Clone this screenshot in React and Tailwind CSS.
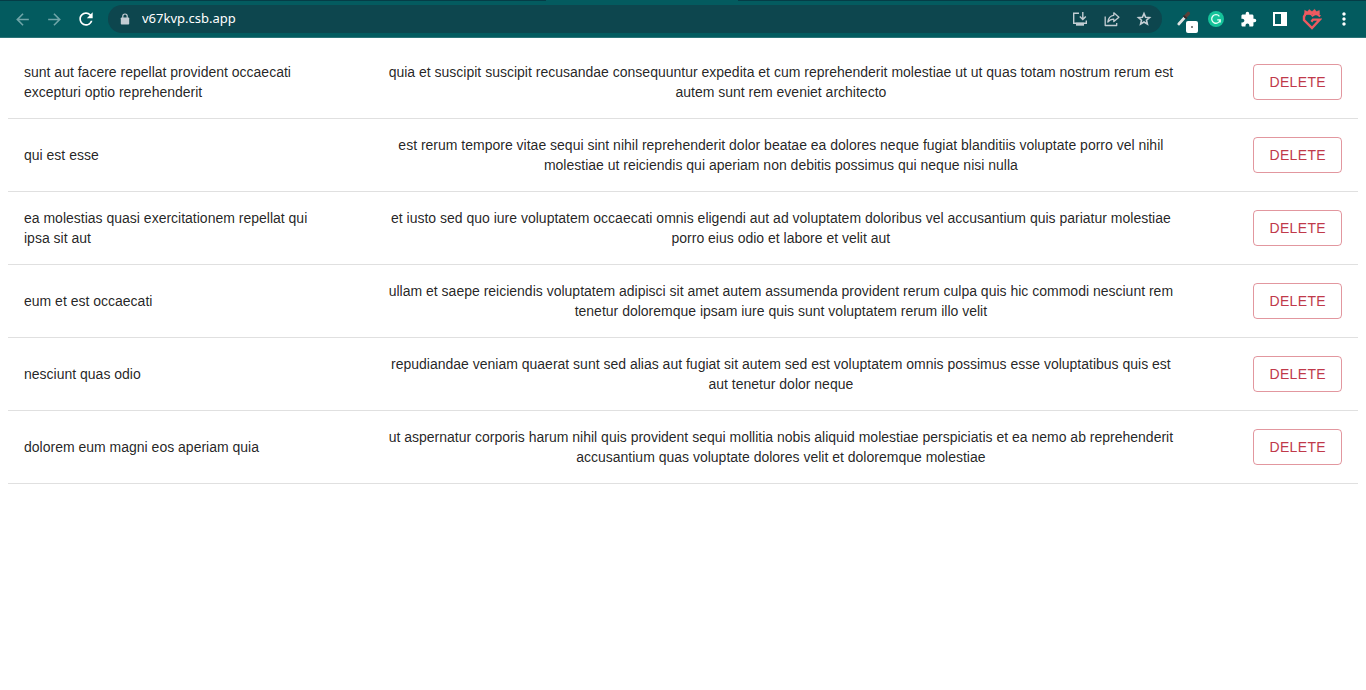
import { MdArrowBack, MdArrowForward, MdRefresh, MdExtension, MdMoreVert } from "react-icons/md";

const posts = [
  { id: 1, title: "sunt aut facere repellat provident occaecati excepturi optio reprehenderit", body: "quia et suscipit suscipit recusandae consequuntur expedita et cum reprehenderit molestiae ut ut quas totam nostrum rerum est autem sunt rem eveniet architecto" },
  { id: 2, title: "qui est esse", body: "est rerum tempore vitae sequi sint nihil reprehenderit dolor beatae ea dolores neque fugiat blanditiis voluptate porro vel nihil molestiae ut reiciendis qui aperiam non debitis possimus qui neque nisi nulla" },
  { id: 3, title: "ea molestias quasi exercitationem repellat qui ipsa sit aut", body: "et iusto sed quo iure voluptatem occaecati omnis eligendi aut ad voluptatem doloribus vel accusantium quis pariatur molestiae porro eius odio et labore et velit aut" },
  { id: 4, title: "eum et est occaecati", body: "ullam et saepe reiciendis voluptatem adipisci sit amet autem assumenda provident rerum culpa quis hic commodi nesciunt rem tenetur doloremque ipsam iure quis sunt voluptatem rerum illo velit" },
  { id: 5, title: "nesciunt quas odio", body: "repudiandae veniam quaerat sunt sed alias aut fugiat sit autem sed est voluptatem omnis possimus esse voluptatibus quis est aut tenetur dolor neque" },
  { id: 6, title: "dolorem eum magni eos aperiam quia", body: "ut aspernatur corporis harum nihil quis provident sequi mollitia nobis aliquid molestiae perspiciatis et ea nemo ab reprehenderit accusantium quas voluptate dolores velit et doloremque molestiae" },
];

function IconButton({ label, className = "", children }) {
  return (
    <button type="button" aria-label={label} className={`flex size-5 shrink-0 items-center justify-center ${className}`}>
      {children}
    </button>
  );
}

function LockIcon() {
  return (
    <svg viewBox="0 0 10 12" className="h-3 w-2.5 shrink-0">
      <rect x="0.8" y="4.4" width="8.4" height="7.2" rx="0.8" fill="currentColor" />
      <path d="M2.8 5V3.2a2.2 2.2 0 0 1 4.4 0V5" fill="none" stroke="currentColor" strokeWidth="1.2" />
    </svg>
  );
}

function InstallIcon() {
  return (
    <svg viewBox="0 0 16 16" className="size-4" fill="none" stroke="currentColor" strokeWidth="1.4">
      <path d="M7 2.2H1.7v10h12.6V9.5M10.8 1v7M7.8 5.5l3 3 3-3" />
      <path d="M4 13.2h8" strokeWidth="3" />
    </svg>
  );
}

function ShareIcon() {
  return (
    <svg viewBox="0 0 16 16" className="size-4" fill="none" stroke="currentColor" strokeWidth="1.3" strokeLinejoin="round">
      <path d="M1.2 5.5v9h11.5V12" />
      <path d="M9.8 1.8 14.9 6.3 9.8 10.6V8.2C7 8.2 5.4 9 3.8 11 4.2 7.6 6 4.8 9.8 4.3z" />
    </svg>
  );
}

function StarIcon() {
  return (
    <svg viewBox="0 0 16 16" className="size-4" fill="none" stroke="currentColor" strokeWidth="1.6" strokeLinejoin="miter">
      <path d="M8 2.6 9.6 6.3 13.5 6.6 10.5 9.2 11.4 13 8 11 4.6 13 5.5 9.2 2.5 6.6 6.4 6.3z" />
    </svg>
  );
}

function PickerIcon() {
  return (
    <svg viewBox="0 0 20 20" className="size-5 overflow-visible">
      <path d="M4.8 15 10.6 8.6" stroke="#dfe3e2" strokeWidth="2.8" strokeLinecap="round" />
      <path d="M11.4 7.6 14.4 4.4" stroke="#5a4038" strokeWidth="3.4" strokeLinecap="round" />
      <path d="M9.4 6.6 12.8 9.6" stroke="#33262a" strokeWidth="1.6" />
      <rect x="12" y="12" width="12" height="12" rx="2" fill="#fff" />
      <path d="M17.2 18h1.6" stroke="#333" strokeWidth="1.4" />
    </svg>
  );
}

function GrammarIcon() {
  return (
    <svg viewBox="0 0 16 16" className="size-4" fill="none">
      <circle cx="8" cy="8" r="8" fill="#15c39a" />
      <path d="M11.4 5.3A4.3 4.3 0 1 0 12.2 8.8H9.2M12.2 8.8v2.6" stroke="#e8fff8" strokeWidth="1.3" />
    </svg>
  );
}

function SidePanelIcon() {
  return (
    <svg viewBox="0 0 14 14" className="size-3.5">
      <path fill="currentColor" fillRule="evenodd" d="M0 0h14v14H0zM2 2v10h6V2z" />
    </svg>
  );
}

function CrestIcon() {
  return (
    <svg viewBox="0 0 20 22" className="h-[22px] w-5 shrink-0" fill="none" stroke="#ee5a60">
      <path d="M10 6.4 7.2 5.4 3.6 5.8 2 8.6V12l8 8 7.8-8.4H11l-1.6 2.2" strokeWidth="2.4" />
      <path d="M9.6 8.2 13 6l2.6.4 2.6 2" strokeWidth="2.2" />
      <path d="M2.6 2.2 5.4 3.6 7.2 1.4 10 3.6 12.6 1.2 14.4 3.6 17.4 2.4 17.6 6H2.6z" fill="#ee5a60" strokeWidth="0.4" />
    </svg>
  );
}

function BrowserBar() {
  return (
    <header className="border-b border-[#2b7478] bg-[#035b5f] text-white">
      <div className="flex h-px bg-[#053c46]">
        <div className="ml-[40%] w-[14%] bg-[#035b5f]" />
      </div>
      <div className="flex items-center px-3 py-1">
        <nav className="flex items-center gap-3" aria-label="Navigation">
          <IconButton label="Back" className="text-[#6fa5a8]"><MdArrowBack size={19} /></IconButton>
          <IconButton label="Forward" className="text-[#6fa5a8]"><MdArrowForward size={19} /></IconButton>
          <IconButton label="Reload"><MdRefresh size={20} /></IconButton>
        </nav>
        <div className="ml-3 flex h-7 flex-1 items-center rounded-full bg-[#0d464e] pr-2 pl-3 text-[#c3cdd3]">
          <LockIcon />
          <input
            aria-label="Address"
            defaultValue="v67kvp.csb.app"
            className="ml-3 min-w-0 flex-1 bg-transparent font-['Noto_Sans',sans-serif] text-[13px] text-white outline-none"
          />
          <div className="flex items-center gap-3">
            <IconButton label="Install app"><InstallIcon /></IconButton>
            <IconButton label="Share"><ShareIcon /></IconButton>
            <IconButton label="Bookmark"><StarIcon /></IconButton>
          </div>
        </div>
        <div className="ml-3 flex items-center gap-3">
          <IconButton label="Color picker"><PickerIcon /></IconButton>
          <IconButton label="Writing assistant"><GrammarIcon /></IconButton>
          <IconButton label="Extensions"><MdExtension size={17} /></IconButton>
          <IconButton label="Side panel"><SidePanelIcon /></IconButton>
          <IconButton label="Profile"><CrestIcon /></IconButton>
          <IconButton label="Menu"><MdMoreVert size={20} /></IconButton>
        </div>
      </div>
    </header>
  );
}

export default function App() {
  return (
    <div className="min-h-screen bg-white font-['Liberation_Sans',Arial,sans-serif]">
      <BrowserBar />
      <main className="p-2">
        <table className="w-full table-fixed border-collapse text-sm/5 text-black/87">
          <colgroup>
            <col className="w-[26%]" />
            <col className="w-5/8" />
            <col />
          </colgroup>
          <tbody>
            {posts.map((post) => (
              <tr key={post.id} className="border-b border-[#e0e0e0]">
                <td className="py-4 pr-10 pl-4">{post.title}</td>
                <td className="px-6 py-4 text-center">{post.body}</td>
                <td className="px-4 text-right">
                  <button type="button" className="h-9 rounded border border-[#c62f3f]/50 px-[15px] align-middle tracking-wide text-[#c0394a]">
                    DELETE
                  </button>
                </td>
              </tr>
            ))}
          </tbody>
        </table>
      </main>
    </div>
  );
}
